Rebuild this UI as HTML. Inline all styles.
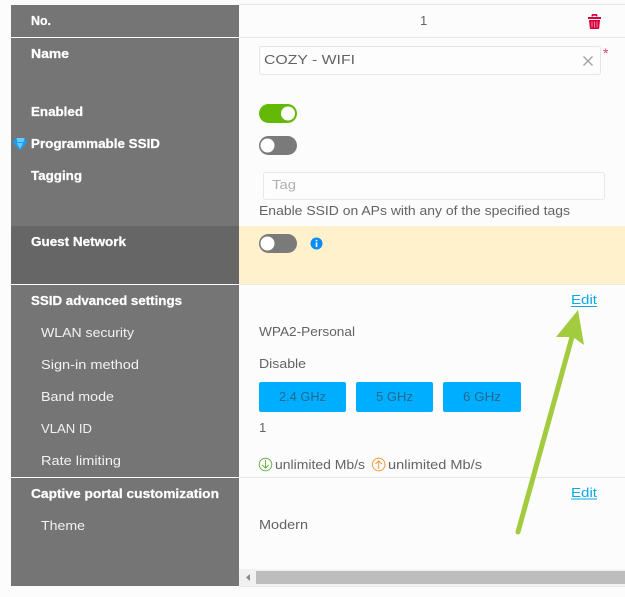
<!DOCTYPE html>
<html>
<head>
<meta charset="utf-8">
<style>
html,body{margin:0;padding:0;width:625px;height:597px;overflow:hidden;background:#fcfcfc}
svg{display:block}
text{font-family:"Liberation Sans",sans-serif;font-size:13px;fill:#636363}
.h{font-weight:bold;fill:#fff;stroke:#fff;stroke-width:.25px}
.s{fill:#f2f2f2}
.l{fill:#0da9e6}
</style>
</head>
<body>
<svg width="625" height="597" viewBox="0 0 625 597" xmlns="http://www.w3.org/2000/svg">
<rect width="625" height="597" fill="#fcfcfc"/>
<!-- right lines -->
<rect x="239" y="4" width="386" height="1" fill="#e6e6e6"/>
<rect x="239" y="37" width="386" height="1" fill="#e6e6e6"/>
<rect x="239" y="226" width="386" height="58" fill="#fff1cc"/>
<rect x="239" y="284" width="386" height="1" fill="#e6e6e6"/>
<rect x="239" y="477" width="386" height="1" fill="#e6e6e6"/>
<!-- left panel -->
<rect x="11" y="5" width="228" height="581" fill="#757575"/>
<rect x="11" y="226" width="228" height="58" fill="#666"/>
<rect x="11" y="37" width="228" height="1" fill="#fff"/>
<rect x="11" y="284" width="228" height="1" fill="#fff"/>
<rect x="11" y="477" width="228" height="1" fill="#fff"/>
<!-- left labels -->
<text class="h" x="31" y="25" textLength="20" lengthAdjust="spacingAndGlyphs">No.</text>
<text class="h" x="31" y="58" textLength="38" lengthAdjust="spacingAndGlyphs">Name</text>
<text class="h" x="31" y="116" textLength="52" lengthAdjust="spacingAndGlyphs">Enabled</text>
<text class="h" x="31" y="148" textLength="129" lengthAdjust="spacingAndGlyphs">Programmable SSID</text>
<text class="h" x="31" y="180" textLength="51" lengthAdjust="spacingAndGlyphs">Tagging</text>
<text class="h" x="31" y="246" textLength="95" lengthAdjust="spacingAndGlyphs">Guest Network</text>
<text class="h" x="31" y="305" textLength="151" lengthAdjust="spacingAndGlyphs">SSID advanced settings</text>
<text class="s" x="41" y="337" textLength="93" lengthAdjust="spacingAndGlyphs">WLAN security</text>
<text class="s" x="41" y="369" textLength="98" lengthAdjust="spacingAndGlyphs">Sign-in method</text>
<text class="s" x="41" y="401" textLength="73" lengthAdjust="spacingAndGlyphs">Band mode</text>
<text class="s" x="41" y="433" textLength="51" lengthAdjust="spacingAndGlyphs">VLAN ID</text>
<text class="s" x="41" y="465" textLength="80" lengthAdjust="spacingAndGlyphs">Rate limiting</text>
<text class="h" x="31" y="498" textLength="188" lengthAdjust="spacingAndGlyphs">Captive portal customization</text>
<text class="s" x="41" y="530" textLength="44" lengthAdjust="spacingAndGlyphs">Theme</text>
<!-- diamond -->
<path d="M16.500 138h8l3 4-7.500 8.500-7.500-8.500z" fill="#1f9cf0"/>
<path d="M16.500 138h8l-1 4h-6zM17 143h6l-3 6z" fill="#62cdf9"/>
<!-- No. row -->
<text x="420" y="25" style="font-size:13px">1</text>
<path d="M588 17h13v2h-13z M591.500 15.500c0-1 .6-1.500 1.500-1.500h3c.9 0 1.500.5 1.500 1.500v1h-1.500v-.8h-3v.8h-1.500z M589 20h11l-.8 8c0 .6-.5 1-1 1h-7.400c-.5 0-1-.4-1-1z" fill="#d6003c"/>
<path d="M592 21.500v6M594.500 21.500v6M597 21.500v6" stroke="#f7a0b5" stroke-width=".8"/>
<!-- Name input -->
<rect x="259.500" y="46.500" width="341" height="28" rx="2" fill="#fdfdfd" stroke="#e6e6e6"/>
<text x="264" y="64" textLength="91" lengthAdjust="spacingAndGlyphs">COZY - WIFI</text>
<path d="M583.500 56.500l9 9M592.500 56.500l-9 9" stroke="#a3a3a3" stroke-width="1.400" fill="none"/>
<text x="603" y="58" style="fill:#e8415f;font-size:14px">*</text>
<!-- toggles -->
<rect x="259" y="104" width="38" height="19" rx="9.500" fill="#64b907"/>
<circle cx="288" cy="113.500" r="7" fill="#fff"/>
<rect x="259" y="136" width="38" height="19" rx="9.500" fill="#7a7a7a"/>
<circle cx="267.500" cy="145.500" r="7" fill="#fff"/>
<rect x="259" y="234" width="38" height="19" rx="9.500" fill="#7a7a7a"/>
<circle cx="267.500" cy="243.500" r="7" fill="#fff"/>
<!-- info -->
<circle cx="316.500" cy="243.500" r="6" fill="#0a8cf0"/>
<rect x="315.700" y="242.500" width="1.600" height="4.500" fill="#fff"/>
<rect x="315.700" y="239.800" width="1.600" height="1.600" fill="#fff"/>
<!-- Tag input -->
<rect x="263.500" y="172.500" width="341" height="27" rx="2" fill="#fdfdfd" stroke="#e8e8e8"/>
<text x="272" y="189" textLength="24" lengthAdjust="spacingAndGlyphs" style="fill:#b0b0b0">Tag</text>
<text x="259" y="215" textLength="311" lengthAdjust="spacingAndGlyphs">Enable SSID on APs with any of the specified tags</text>
<!-- advanced -->
<text class="l" x="571" y="304" textLength="26" lengthAdjust="spacingAndGlyphs">Edit</text>
<rect x="571" y="306" width="26" height="1" fill="#0da9e6"/>
<text x="259" y="336" textLength="96" lengthAdjust="spacingAndGlyphs">WPA2-Personal</text>
<text x="259" y="368" textLength="47" lengthAdjust="spacingAndGlyphs">Disable</text>
<rect x="259" y="382" width="87" height="30" rx="2" fill="#00aeff"/>
<rect x="356" y="382" width="77" height="30" rx="2" fill="#00aeff"/>
<rect x="443" y="382" width="78" height="30" rx="2" fill="#00aeff"/>
<text x="279" y="401" textLength="47" lengthAdjust="spacingAndGlyphs" style="fill:#26688c">2.4 GHz</text>
<text x="376" y="401" textLength="37" lengthAdjust="spacingAndGlyphs" style="fill:#26688c">5 GHz</text>
<text x="463" y="401" textLength="38" lengthAdjust="spacingAndGlyphs" style="fill:#26688c">6 GHz</text>
<text x="259" y="432">1</text>
<!-- rate -->
<circle cx="265.500" cy="464.500" r="6.300" fill="none" stroke="#6ab04a" stroke-width="1"/>
<path d="M265.500 460v8M262.300 465l3.200 3.200 3.200-3.200" fill="none" stroke="#6ab04a" stroke-width="1"/>
<text x="275" y="469" textLength="90" lengthAdjust="spacingAndGlyphs">unlimited Mb/s</text>
<circle cx="378.700" cy="464.500" r="6.300" fill="none" stroke="#f0993e" stroke-width="1"/>
<path d="M378.700 469v-8M375.500 464l3.200-3.200 3.200 3.200" fill="none" stroke="#f0993e" stroke-width="1"/>
<text x="388" y="469" textLength="94" lengthAdjust="spacingAndGlyphs">unlimited Mb/s</text>
<!-- captive -->
<text class="l" x="571" y="497" textLength="26" lengthAdjust="spacingAndGlyphs">Edit</text>
<rect x="571" y="498.500" width="26" height="1" fill="#0da9e6"/>
<text x="259" y="529" textLength="49" lengthAdjust="spacingAndGlyphs">Modern</text>
<!-- scrollbar -->
<rect x="239" y="569" width="386" height="17" fill="#f1f1f1"/>
<rect x="256" y="571" width="369" height="13" fill="#bdbdbd"/>
<path d="M250 574v7l-4-3.500z" fill="#8a8a8a"/>
<rect x="239" y="586" width="386" height="1" fill="#e8e8e8"/>
<!-- arrow -->
<path d="M518 532L572 337" stroke="#a2cb3e" stroke-width="5" stroke-linecap="round" fill="none"/>
<path d="M578 310L584 345 573 337 556 337z" fill="#a2cb3e"/>
</svg>
</body>
</html>
